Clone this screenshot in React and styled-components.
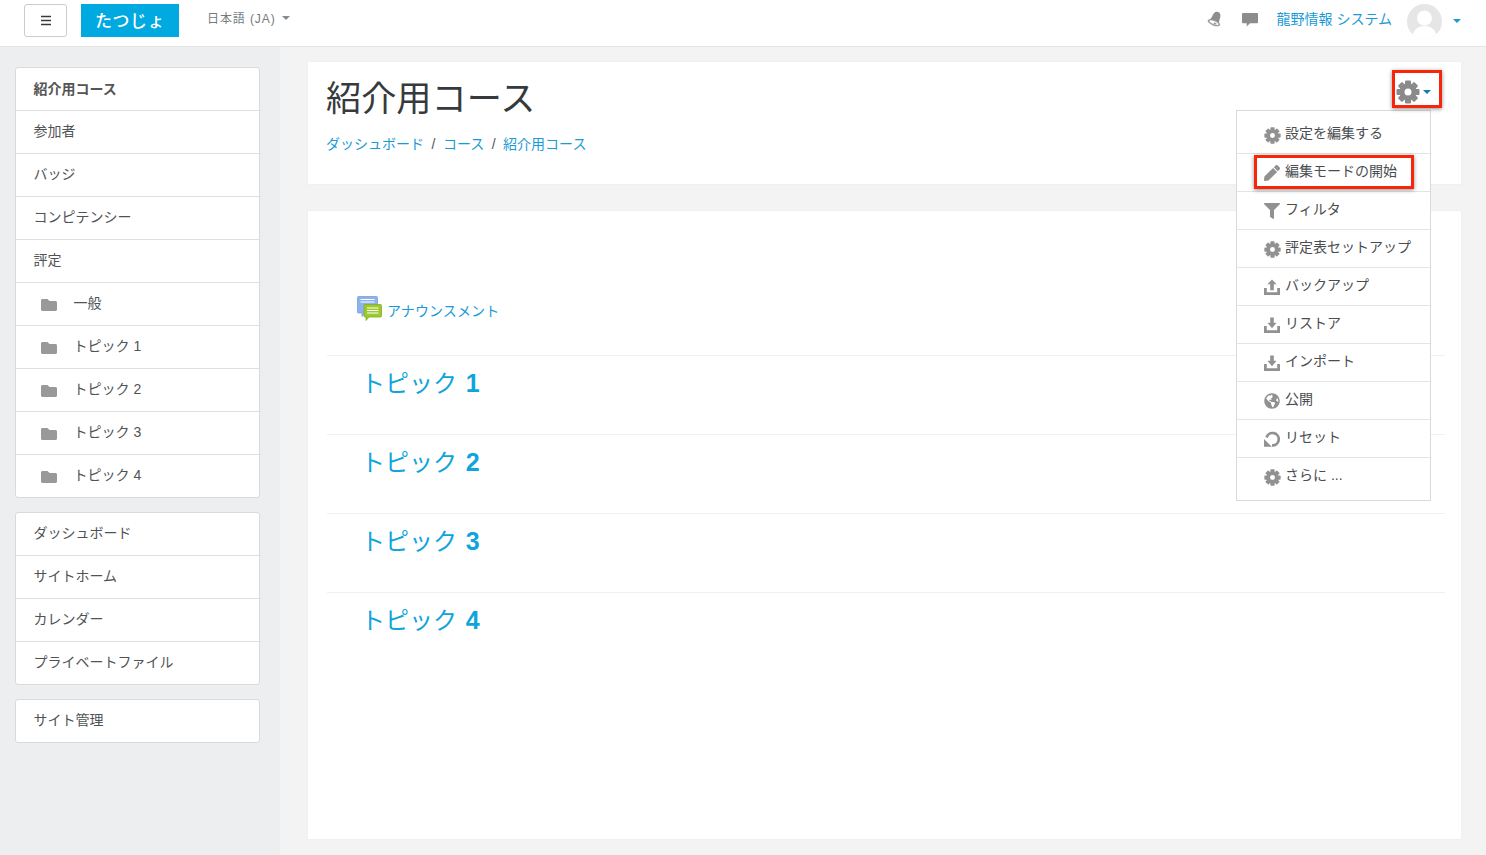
import React from 'react';
import styled, { createGlobalStyle } from 'styled-components';
import { FaFilter, FaFolder, FaGlobeAmericas, FaPen } from 'react-icons/fa';

const GlobalStyle = createGlobalStyle`
  html, body {
    margin: 0;
    padding: 0;
    background: #f3f3f3;
    font-family: "Liberation Sans", "Noto Sans CJK JP", sans-serif;
    font-size: 14px;
    color: #373a3c;
  }
  * { box-sizing: border-box; }
`;

const Page = styled.div`
  width: 1486px;
  height: 855px;
  overflow: hidden;
  position: relative;
`;

const Header = styled.header`
  height: 47px;
  background: #fff;
  border-bottom: 1px solid #e3e3e3;
  display: flex;
  align-items: flex-start;
  padding: 4px 25px 0 24px;
`;

const MenuButton = styled.button`
  width: 43px;
  height: 33px;
  background: #fff;
  border: 1px solid #ccc;
  border-radius: 3px;
  padding: 0;
  display: flex;
  align-items: center;
  justify-content: center;
  margin-right: 14px;
`;

const Brand = styled.div`
  width: 98px;
  height: 33px;
  padding-bottom: 2px;
  background: #00a9e0;
  color: #fff;
  font-size: 17px;
  font-weight: 500;
  letter-spacing: 0.5px;
  display: flex;
  align-items: center;
  justify-content: center;
`;

const Lang = styled.div`
  margin-left: 28px;
  height: 29px;
  padding-bottom: 2px;
  display: flex;
  align-items: center;
  font-size: 12px;
  letter-spacing: 0.9px;
  color: #747a7e;
`;

const Caret = styled.span`
  display: inline-block;
  width: 0;
  height: 0;
  margin-left: ${(p) => p.$gap || 6}px;
  border-left: 4px solid transparent;
  border-right: 4px solid transparent;
  border-top: 4px solid ${(p) => p.$color || '#868b8f'};
`;

const HeaderRight = styled.div`
  margin-left: auto;
  height: 33px;
  display: flex;
  align-items: center;
`;

const HeaderIcon = styled.span`
  display: flex;
  width: 16px;
  margin-right: ${(p) => p.$mr}px;
  margin-bottom: 2px;
`;

const UserName = styled.a`
  color: #1a9ad6;
  font-size: 14px;
  padding-bottom: 5px;
  margin-right: 15px;
`;

const Avatar = styled.span`
  width: 35px;
  height: 35px;
  margin-top: 2px;
  display: block;
  border-radius: 50%;
  overflow: hidden;
`;

const Body = styled.div`
  display: flex;
  height: 808px;
`;

const Sidebar = styled.aside`
  width: 280px;
  background: #eceeef;
  padding: 20px 20px 0 15px;
  display: flex;
  flex-direction: column;
  gap: 14px;
`;

const NavBlock = styled.nav`
  background: #fff;
  border: 1px solid #d9dadb;
  border-radius: 3px;
  display: flex;
  flex-direction: column;
`;

const NavRow = styled.div`
  height: 43px;
  display: flex;
  align-items: center;
  padding-left: ${(p) => (p.$nested ? 25 : 17.5)}px;
  padding-bottom: ${(p) => (p.$active ? 2 : 4)}px;
  font-weight: ${(p) => (p.$active ? 700 : 400)};
  color: ${(p) => (p.$active ? '#555' : '#4f5356')};
  border-bottom: 1px solid #dedfe0;
  &:last-child {
    border-bottom: none;
    height: 42px;
  }
`;

const FolderSlot = styled.span`
  display: flex;
  width: 32.5px;
  color: #999;
  padding-top: 5px;
`;

const Main = styled.main`
  flex: 1;
  padding: 14px 24px 0 27px;
  display: flex;
  flex-direction: column;
  gap: 25px;
`;

const CourseHeader = styled.section`
  height: 124px;
  background: #fff;
  border: 1px solid #f0f0f0;
  padding: 14px 18px;
`;

const CourseTitle = styled.h1`
  margin: 0;
  font-size: 35.2px;
  line-height: 46px;
  font-weight: 400;
  color: #373a3c;
`;

const Breadcrumb = styled.div`
  margin-top: 11px;
  display: flex;
  align-items: baseline;
  gap: 7.5px;
  color: #555;
  a { color: #1a9ad6; }
`;

const Content = styled.section`
  height: 630px;
  background: #fff;
  border: 1px solid #f0f0f0;
  padding: 84px 16px 0 19px;
`;

const Announcement = styled.a`
  height: 60px;
  display: flex;
  align-items: flex-start;
  padding-left: 30px;
  color: #1a9ad6;
  font-size: 14px;
  letter-spacing: 0.1px;
  svg { margin: 1px 5px 0 0; }
  span { margin-top: 5px; }
`;

const Topic = styled.div`
  height: 79px;
  border-top: 1px solid #f0f0f0;
  padding: 10px 0 0 34px;
  font-size: 24px;
  line-height: 34px;
  color: #0fa4dc;
  b {
    font-weight: 700;
    font-size: 25px;
    margin-left: 2px;
  }
`;

const Dropdown = styled.div`
  position: absolute;
  left: 1236px;
  top: 110px;
  width: 195px;
  height: 391px;
  padding-top: 5px;
  background: #fff;
  border: 1px solid #d9d9d9;
`;

const MenuItem = styled.div`
  height: 38px;
  display: flex;
  align-items: center;
  padding: 0 0 0 26px;
  border-bottom: 1px solid #e4e4e4;
  color: #4a4d50;
  &:last-child { border-bottom: none; }
`;

const MenuIcon = styled.span`
  display: flex;
  align-items: center;
  justify-content: center;
  width: 18px;
  margin-right: 4px;
  color: #919191;
  padding-top: 1px;
`;

const MenuLabel = styled.span`
  margin-top: -6px;
`;

const Highlight = styled.div`
  position: absolute;
  border: 3px solid #f5260a;
  box-shadow: 0 1px 4px rgba(0, 0, 0, 0.45);
  left: ${(p) => p.$x}px;
  top: ${(p) => p.$y}px;
  width: ${(p) => p.$w}px;
  height: ${(p) => p.$h}px;
`;

const GearButton = styled.div`
  position: absolute;
  left: 1396px;
  top: 80px;
  display: flex;
  align-items: center;
  color: #8a8a8a;
`;

const Bars = () => (
  <svg width="12" height="11" viewBox="0 0 12 11">
    <path d="M1 1.5h10M1 5.5h10M1 9.5h10" stroke="#373a3c" strokeWidth="1.7" />
  </svg>
);

const Gear = ({ size = 17 }) => (
  <svg width={size} height={size} viewBox="0 0 24 24" fill="currentColor">
    {[0, 45, 90, 135, 180, 225, 270, 315].map((a) => (
      <rect key={a} x="9" y="0.5" width="6" height="6" rx="1" transform={`rotate(${a} 12 12)`} />
    ))}
    <path
      fillRule="evenodd"
      d="M12 3.500a8.500 8.500 0 1 0 0 17 8.500 8.500 0 0 0 0-17zm0 5a3.500 3.500 0 1 1 0 7 3.500 3.500 0 0 1 0-7z"
    />
  </svg>
);

const Bell = () => (
  <svg width="16" height="17" viewBox="0 0 16 17">
    <g transform="rotate(22 8 9)">
      <path d="M8 0.500C5 0.500 4 3.500 4 6.500 4 9 2.500 11 2.500 11h11S12 9 12 6.500C12 3.500 11 0.500 8 0.500z" fill="#8e8e8e" />
      <ellipse cx="8" cy="12" rx="6.600" ry="2.800" fill="#9c9c9c" />
      <ellipse cx="8" cy="11.800" rx="4.800" ry="1.500" fill="#fff" />
      <ellipse cx="9.500" cy="12.200" rx="1.700" ry="0.800" fill="#9c9c9c" />
    </g>
  </svg>
);

const Comment = () => (
  <svg width="17" height="16" viewBox="0 0 17 16">
    <path d="M1 0.500h15a1 1 0 0 1 1 1v9a1 1 0 0 1-1 1H8.500L5 15v-3.500H1a1 1 0 0 1-1-1v-9a1 1 0 0 1 1-1z" fill="#8c8c8c" />
  </svg>
);

const UserPic = () => (
  <svg width="35" height="35" viewBox="0 0 35 35">
    <rect width="35" height="35" fill="#e6e6e6" />
    <circle cx="17.500" cy="14" r="7.500" fill="#fff" />
    <path d="M5 35c0-9 6-13 12.500-13S30 26 30 35z" fill="#fff" />
  </svg>
);

const UploadIcon = () => (
  <svg width="16" height="16" viewBox="0 0 16 16">
    <path d="M0 9h2.800v4.200h10.400V9H16v7H0z" fill="#919191" />
    <path d="M8 0.500l4.600 4.800H9.800v6H6.200v-6H3.400z" fill="#919191" />
  </svg>
);

const DownloadIcon = () => (
  <svg width="16" height="16" viewBox="0 0 16 16">
    <path d="M0 9h2.800v4.200h10.400V9H16v7H0z" fill="#919191" />
    <path d="M6.200 0.500h3.600v5.200h2.800L8 11.200 3.400 5.700h2.800z" fill="#919191" />
  </svg>
);

const ResetIcon = () => (
  <svg width="16" height="16" viewBox="0 0 16 16">
    <path d="M2.600 6.500A6.200 6.200 0 1 1 8 14.400" fill="none" stroke="#919191" strokeWidth="2.700" />
    <path d="M0 8v7.800h7.800z" fill="#919191" />
  </svg>
);

const ForumIcon = () => (
  <svg width="25" height="25" viewBox="0 0 25 25">
    <path d="M1.500 0.500h18a1 1 0 0 1 1 1V16a1 1 0 0 1-1 1H8l-3 3.500V17H1.500a1 1 0 0 1-1-1V1.500a1 1 0 0 1 1-1z" fill="#8db3ef" stroke="#7aa0e0" strokeWidth="0.8" />
    <path d="M3.500 3.500h14M3.500 6h14" stroke="#fff" strokeWidth="1" />
    <path d="M8 8.500h15.500a1 1 0 0 1 1 1V20a1 1 0 0 1-1 1H12l-3 3.500V21H8a1 1 0 0 1-1-1V9.500a1 1 0 0 1 1-1z" fill="#9cc92c" stroke="#86ad1f" strokeWidth="0.8" />
    <path d="M10 12h11.500M10 14.500h11.500M10 17h11.500" stroke="#fff" strokeWidth="1" />
  </svg>
);

const mainNav = ['紹介用コース', '参加者', 'バッジ', 'コンピテンシー', '評定'];
const sections = ['一般', 'トピック 1', 'トピック 2', 'トピック 3', 'トピック 4'];
const siteNav = ['ダッシュボード', 'サイトホーム', 'カレンダー', 'プライベートファイル'];

const menu = [
  { label: '設定を編集する', icon: <Gear /> },
  { label: '編集モードの開始', icon: <FaPen size={16} /> },
  { label: 'フィルタ', icon: <FaFilter size={16} /> },
  { label: '評定表セットアップ', icon: <Gear /> },
  { label: 'バックアップ', icon: <UploadIcon /> },
  { label: 'リストア', icon: <DownloadIcon /> },
  { label: 'インポート', icon: <DownloadIcon /> },
  { label: '公開', icon: <FaGlobeAmericas size={16} /> },
  { label: 'リセット', icon: <ResetIcon /> },
  { label: 'さらに ...', icon: <Gear /> },
];

export default function App() {
  return (
    <Page>
      <GlobalStyle />
      <Header>
        <MenuButton><Bars /></MenuButton>
        <Brand>たつじょ</Brand>
        <Lang>日本語 (JA)<Caret /></Lang>
        <HeaderRight>
          <HeaderIcon $mr={19}><Bell /></HeaderIcon>
          <HeaderIcon $mr={19}><Comment /></HeaderIcon>
          <UserName>龍野情報 システム</UserName>
          <Avatar><UserPic /></Avatar>
          <Caret $gap={11} $color="#1a9ad6" />
        </HeaderRight>
      </Header>
      <Body>
        <Sidebar>
          <NavBlock>
            {mainNav.map((t, i) => (
              <NavRow key={t} $active={i === 0}>{t}</NavRow>
            ))}
            {sections.map((t) => (
              <NavRow key={t} $nested>
                <FolderSlot><FaFolder size={16} /></FolderSlot>
                {t}
              </NavRow>
            ))}
          </NavBlock>
          <NavBlock>
            {siteNav.map((t) => <NavRow key={t}>{t}</NavRow>)}
          </NavBlock>
          <NavBlock>
            <NavRow>サイト管理</NavRow>
          </NavBlock>
        </Sidebar>
        <Main>
          <CourseHeader>
            <CourseTitle>紹介用コース</CourseTitle>
            <Breadcrumb>
              <a>ダッシュボード</a><span>/</span><a>コース</a><span>/</span><a>紹介用コース</a>
            </Breadcrumb>
          </CourseHeader>
          <Content>
            <Announcement><ForumIcon /><span>アナウンスメント</span></Announcement>
            <Topic>トピック <b>1</b></Topic>
            <Topic>トピック <b>2</b></Topic>
            <Topic>トピック <b>3</b></Topic>
            <Topic>トピック <b>4</b></Topic>
          </Content>
        </Main>
      </Body>
      <GearButton>
        <Gear size={24} />
        <Caret $gap={3} $color="#0f7fa8" />
      </GearButton>
      <Dropdown>
        {menu.map((m) => (
          <MenuItem key={m.label}>
            <MenuIcon>{m.icon}</MenuIcon>
            <MenuLabel>{m.label}</MenuLabel>
          </MenuItem>
        ))}
      </Dropdown>
      <Highlight $x={1392} $y={70} $w={50} $h={38} />
      <Highlight $x={1254} $y={155} $w={160} $h={34} />
    </Page>
  );
}
